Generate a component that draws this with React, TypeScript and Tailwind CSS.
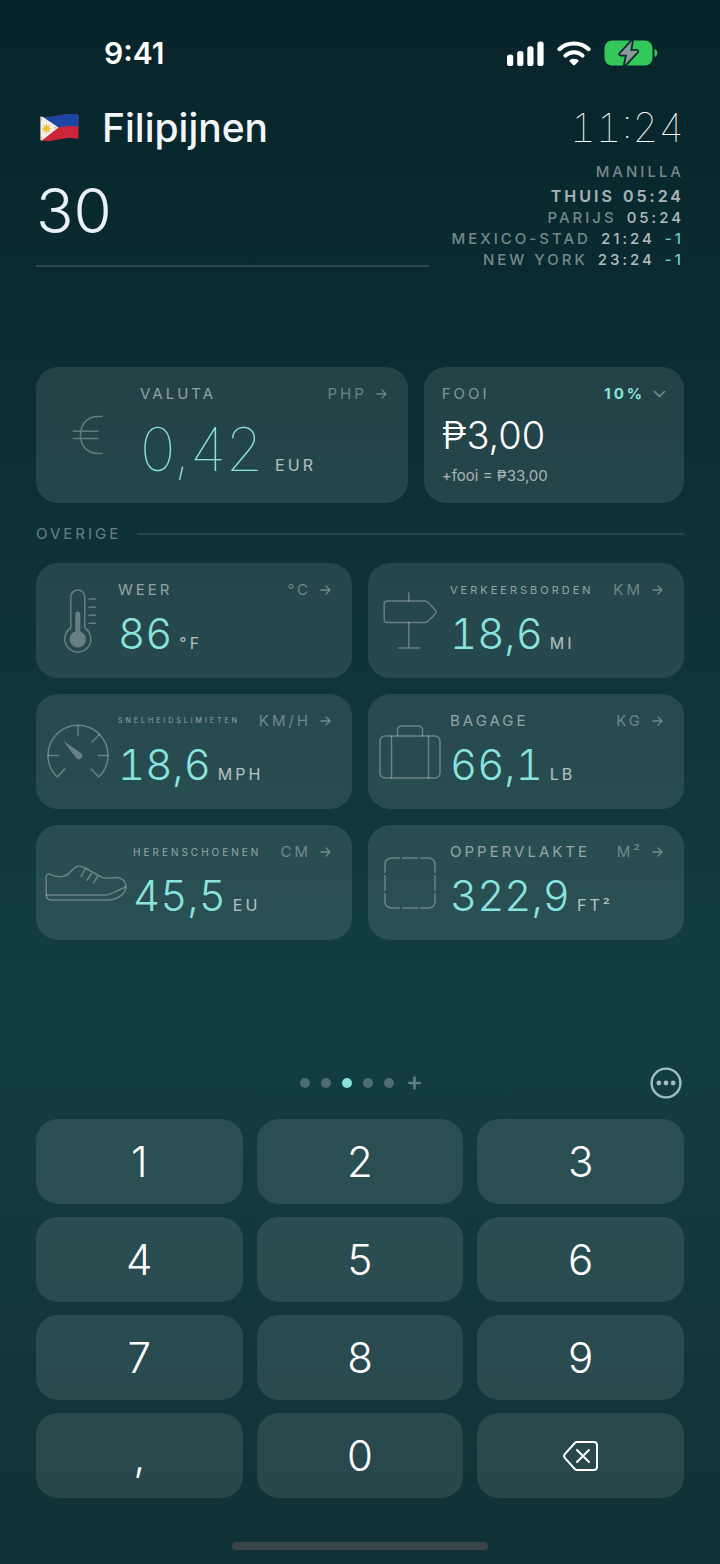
import { useState } from "react";
import type { ReactNode } from "react";

const clocks = [
  { city: "Parijs", time: "05:24", day: "" },
  { city: "Mexico-Stad", time: "21:24", day: "-1" },
  { city: "New York", time: "23:24", day: "-1" },
];

const keys = ["1", "2", "3", "4", "5", "6", "7", "8", "9", ",", "0"];

const Flag = () => (
  <svg width="39" height="28" viewBox="0 0 39 28" role="img" aria-label="Vlag van de Filipijnen">
    <defs>
      <clipPath id="flag">
        <path d="M0.5 2.5C7 4 13 2.5 19 1.2S32 -0.8 38.5 1V25C32 23.2 26 24 19 25.4S6 27.6 0.5 26.3Z" />
      </clipPath>
    </defs>
    <g clipPath="url(#flag)">
      <path d="M0 0H39V28H0Z" fill="#cc2439" />
      <path d="M0 0H39V12.5C30 11.3 24 12.2 18 13.6L0 15Z" fill="#1d45a3" />
      <path d="M0 1L18.5 13.5L0 28Z" fill="#efeee8" />
      <g stroke="#f0bb2a" strokeWidth="1.2">
        <path d="M6.5 10V19M2 14.5H11M3.3 11.3L9.7 17.7M9.7 11.3L3.3 17.7" />
      </g>
      <circle cx="6.5" cy="14.5" r="2.6" fill="#f0bb2a" />
      <path d="M1.2 5.2L2.2 6.6M1.2 24.6L2.2 23.2M14.6 13.6H16.2" stroke="#f0bb2a" strokeWidth="1.2" />
    </g>
  </svg>
);

const StatusIcons = () => (
  <div className="flex items-center gap-[13px]">
    <svg width="37" height="26" viewBox="0 0 37 26" fill="#fff">
      <rect x="0" y="14.5" width="6.2" height="11.5" rx="2.6" />
      <rect x="10.2" y="11" width="6.2" height="15" rx="2.6" />
      <rect x="20.3" y="6.3" width="6.2" height="19.7" rx="2.6" />
      <rect x="30.4" y="1.5" width="6.2" height="24.5" rx="2.6" />
    </svg>
    <svg width="34" height="26" viewBox="0 0 34 26" fill="none" stroke="#fff" strokeWidth="4" strokeLinecap="round" strokeLinejoin="round">
      <path d="M2.4 9.2C10.2 1.6 23.8 1.6 31.6 9.2" />
      <path d="M8.4 15.6C13.2 11 20.8 11 25.6 15.6" />
      <path d="M13.6 21C15.4 19.6 18.6 19.6 20.4 21L17 24.2Z" fill="#fff" strokeWidth="2.4" />
    </svg>
    <svg width="54" height="28" viewBox="0 0 54 28">
      <rect x="0.5" y="1.5" width="48" height="25" rx="7.5" fill="#34c759" />
      <path d="M50.5 10C54.3 11 54.3 17 50.5 18Z" fill="#34c759" />
      <path
        d="M28 2L16.4 14.6C15.9 15.2 16.1 15.7 16.8 15.7H23L20.8 26L33 13C33.6 12.3 33.3 11.8 32.5 11.8H26.2Z"
        fill="#8a9a9b"
        stroke="#0a2a2f"
        strokeWidth="3.6"
        strokeLinejoin="round"
        paintOrder="stroke"
      />
    </svg>
  </div>
);

const Arrow = () => (
  <svg width="11" height="12" viewBox="0 0 11 12" fill="none" stroke="currentColor" strokeWidth="1.3" strokeLinecap="round" strokeLinejoin="round">
    <path d="M1 6H10M6 2L10 6L6 10" />
  </svg>
);

const iconProps = {
  fill: "none",
  stroke: "currentColor",
  strokeWidth: 1.5,
  strokeLinecap: "round" as const,
  strokeLinejoin: "round" as const,
};

const EuroIcon = () => (
  <svg width="32" height="40" viewBox="0 0 32 40" {...iconProps}>
    <path d="M30 1.5H26C15.5 1.5 8.5 9 8.5 20S15.5 38.5 26 38.5H30M1.5 16.2H26M1.5 23.5H26" />
  </svg>
);

const ThermometerIcon = () => (
  <svg width="37" height="66" viewBox="-3 0 37 66" {...iconProps}>
    <path d="M7.8 40V9A7 7 0 0 1 21.8 9V40A13 13 0 1 1 7.8 40Z" />
    <path d="M26 11H32.5M26 19.2H32.5M26 27.2H32.5M26 35.2H32.5" />
    <path d="M12.3 26A2.5 2.5 0 0 1 17.3 26V43.4A8.2 8.2 0 1 1 12.3 43.4Z" fill="currentColor" stroke="none" />
  </svg>
);

const SignIcon = () => (
  <svg width="54" height="58" viewBox="0 0 54 58" {...iconProps}>
    <path d="M25.8 1V9M25.8 30.5V56M15.5 56H36" />
    <path d="M4 9H41.5C43 9 44 9.3 45 10.3L52.5 18.2C53.5 19.3 53.5 20.3 52.5 21.4L45 29.2C44 30.2 43 30.5 41.5 30.5H4C2 30.5 1.2 29.5 1.2 27.7V11.8C1.2 10 2 9 4 9Z" />
  </svg>
);

const GaugeIcon = () => (
  <svg width="62" height="56" viewBox="0 0 62 56" {...iconProps}>
    <path d="M10.3 53A30 30 0 1 1 51.7 53L44.3 45M10.3 53L17.7 45" />
    <path d="M31 1.5V11.5M1 31.5H11.5M51 31.5H61M52.5 10.5L45 18" />
    <path d="M16.2 16.8L34 29A3.4 3.4 0 0 1 29.6 34.4Z" fill="currentColor" stroke="none" />
  </svg>
);

const BagIcon = () => (
  <svg width="62" height="54" viewBox="0 0 62 54" {...iconProps}>
    <rect x="1" y="11" width="60" height="42" rx="5" />
    <path d="M18.5 11V5C18.5 2.5 20 1 22.5 1H39.5C42 1 43.5 2.5 43.5 5V11M12.5 11V53M49.5 11V53" />
  </svg>
);

const ShoeIcon = () => (
  <svg width="82" height="36" viewBox="0 0 82 36" {...iconProps}>
    <path d="M1.2 30V11.2C1.2 8.8 4 8.6 6 9.6C12 12.6 20 12.4 24 8.4C27.5 4.8 29.5 1.2 34 1.2C38 1.2 40 2.8 43 4.5L50 8.5C54.5 11.2 56.5 13.4 61 13.2L71 12.6C77 12.6 81 16.5 81 21C81 30 71 35 63 35H7C3.5 35 1.2 33 1.2 30Z" />
    <path d="M1.5 30H60C67 30 71 26 80.5 22M40 4.5L36 11.5M46.5 8.5L42.2 15M52.5 11.5L48.5 18" />
  </svg>
);

const AreaIcon = () => (
  <svg width="52" height="52" viewBox="0 0 52 52" {...iconProps} strokeLinecap="butt">
    <path d="M1 16V8C1 3.5 3.5 1 8 1H16M18 1H34M36 1H44C48.5 1 51 3.5 51 8V16M51 18V34M51 36V44C51 48.5 48.5 51 44 51H36M34 51H18M16 51H8C3.5 51 1 48.5 1 44V36M1 34V18" />
  </svg>
);

type Conversion = {
  label: string;
  labelClass?: string;
  value: string;
  unit: string;
  from: string;
  icon: ReactNode;
  iconClass?: string;
};

const conversions: Conversion[] = [
  { label: "Weer", value: "86", unit: "°F", from: "°C", icon: <ThermometerIcon /> },
  { label: "Verkeersborden", labelClass: "text-[11px]", value: "18,6", unit: "mi", from: "km", icon: <SignIcon /> },
  { label: "Snelheidslimieten", labelClass: "text-[7px]", value: "18,6", unit: "mph", from: "km/h", icon: <GaugeIcon /> },
  { label: "Bagage", value: "66,1", unit: "lb", from: "kg", icon: <BagIcon /> },
  { label: "Herenschoenen", labelClass: "text-[10px]", value: "45,5", unit: "EU", from: "cm", icon: <ShoeIcon />, iconClass: "w-[97px]" },
  { label: "Oppervlakte", value: "322,9", unit: "ft²", from: "m²", icon: <AreaIcon /> },
];

const ConversionCard = ({ label, labelClass = "text-[15px]", value, unit, from, icon, iconClass = "w-[82px]" }: Conversion) => (
  <article className="flex h-[115px] rounded-[22px] bg-white/10">
    <div className={`flex shrink-0 items-center justify-center pl-[2px] text-white/30 ${iconClass}`}>{icon}</div>
    <div className="min-w-0 flex-1 pt-[17px] pr-[21px]">
      <div className="flex h-5 items-center justify-between uppercase">
        <h3 className={`tracking-[3px] text-white/50 ${labelClass}`}>{label}</h3>
        <button className="flex items-center gap-[9px] text-[15px] tracking-[3px] text-white/35 uppercase">
          {from}
          <Arrow />
        </button>
      </div>
      <p className="mt-[10px] flex items-baseline gap-[7px] whitespace-nowrap">
        <span className="text-[42px] leading-[48px] font-light text-[#8ae3df] tabular-nums">{value}</span>
        <span className="text-base tracking-[3px] text-white/65 uppercase">{unit}</span>
      </p>
    </div>
  </article>
);

export default function App() {
  const [amount, setAmount] = useState("30");
  const [tip, setTip] = useState("10%");

  const press = (key: string) => setAmount((a) => (a === "0" ? key : a + key));

  return (
    <div className="flex min-h-screen flex-col bg-linear-to-b from-[#07242a] via-[#123e43] via-65% to-[#113236] px-9 pb-[14px] font-['Inter',sans-serif] text-white">
      <div className="flex h-[106px] shrink-0 items-center justify-between pr-[26px] pl-[68px]">
        <time className="text-[30px] font-semibold">9:41</time>
        <StatusIcons />
      </div>

      <header className="flex gap-[23px]">
        <div className="min-w-0 flex-1">
          <div className="flex h-11 items-center gap-[23px] pl-1">
            <Flag />
            <h1 className="text-[39px] font-medium text-[#f3f7fa]">Filipijnen</h1>
          </div>
          <input
            aria-label="Bedrag"
            inputMode="decimal"
            value={amount}
            onChange={(e) => setAmount(e.target.value)}
            className="mt-6 block h-[93px] w-full border-b-2 border-white/15 bg-transparent pb-[19px] text-[62px] font-light text-[#e9f0f6] outline-none"
          />
        </div>
        <div className="text-right text-[15px] tracking-[3px] whitespace-nowrap uppercase">
          <time className="block h-11 text-[40px] leading-[44px] font-thin tracking-normal tabular-nums">11:24</time>
          <p className="mt-3 leading-5 font-medium text-white/45">Manilla</p>
          <p className="mt-[3px] flex justify-end gap-2 text-base leading-[22px] font-semibold text-white/65">
            <span>Thuis</span>
            <time>05:24</time>
          </p>
          <ul className="leading-[21px] font-medium">
            {clocks.map((clock) => (
              <li key={clock.city} className="flex justify-end gap-[10px]">
                <span className="text-white/45">{clock.city}</span>
                <time className="text-white/70">{clock.time}</time>
                {clock.day && <span className="text-[#6fc9c5]">{clock.day}</span>}
              </li>
            ))}
          </ul>
        </div>
      </header>

      <main>
        <section className="mt-[97px] grid grid-cols-[10fr_7fr] gap-4">
          <article className="flex h-[136px] rounded-[22px] bg-white/10">
            <div className="flex w-[104px] shrink-0 items-center justify-center text-white/30">
              <EuroIcon />
            </div>
            <div className="flex-1 pt-[17px] pr-[21px]">
              <div className="flex h-5 items-center justify-between text-[15px] tracking-[3px] uppercase">
                <h2 className="text-white/50">Valuta</h2>
                <button className="flex items-center gap-[9px] text-white/35 uppercase">
                  PHP
                  <Arrow />
                </button>
              </div>
              <p className="mt-[13px] flex items-baseline gap-3 whitespace-nowrap">
                <span className="text-[60px] leading-[64px] font-thin text-[#8ae3df]">0,42</span>
                <span className="text-base tracking-[3px] text-white/65">EUR</span>
              </p>
            </div>
          </article>

          <article className="h-[136px] rounded-[22px] bg-white/10 px-[18px] pt-[17px]">
            <div className="flex h-5 items-center justify-between text-[15px] tracking-[3px] uppercase">
              <label htmlFor="tip" className="text-white/45">
                Fooi
              </label>
              <div className="flex items-center gap-2">
                <select
                  id="tip"
                  value={tip}
                  onChange={(e) => setTip(e.target.value)}
                  className="field-sizing-content appearance-none bg-transparent font-bold tracking-[3px] text-[#8ae3df] outline-none"
                >
                  <option>10%</option>
                  <option>15%</option>
                  <option>20%</option>
                </select>
                <svg width="13" height="8" viewBox="0 0 13 8" fill="none" stroke="#fff" strokeOpacity="0.4" strokeWidth="1.6" strokeLinecap="round" strokeLinejoin="round">
                  <path d="M1.5 1.5L6.5 6.5L11.5 1.5" />
                </svg>
              </div>
            </div>
            <p className="mt-[9px] text-[38px] leading-[44px] font-light">₱3,00</p>
            <p className="mt-[9px] text-[15px] leading-5 text-white/60">+fooi = ₱33,00</p>
          </article>
        </section>

        <section>
          <div className="mt-[21px] mb-[19px] flex items-center gap-4">
            <h2 className="text-[15px] leading-5 tracking-[3px] text-white/40 uppercase">Overige</h2>
            <hr className="flex-1 border-t-2 border-white/10" />
          </div>
          <div className="grid grid-cols-2 gap-4">
            {conversions.map((item) => (
              <ConversionCard key={item.label} {...item} />
            ))}
          </div>
        </section>
      </main>

      <nav className="mt-auto grid grid-cols-[1fr_auto_1fr] items-center pt-8">
        <div className="col-start-2 flex items-center gap-[11px]">
          {[1, 2, 3, 4, 5].map((page) => (
            <button
              key={page}
              aria-label={`Pagina ${page}`}
              className={page === 3 ? "size-[10px] rounded-full bg-[#8ae3df]" : "size-[10px] rounded-full bg-white/25"}
            />
          ))}
          <button aria-label="Pagina toevoegen" className="ml-[3px] text-white/35">
            <svg width="13" height="14" viewBox="0 0 13 14" fill="none" stroke="currentColor" strokeWidth="2.6" strokeLinecap="round">
              <path d="M1.3 7H11.7M6.5 1.5V12.5" />
            </svg>
          </button>
        </div>
        <button aria-label="Meer" className="mr-[2px] justify-self-end text-[#a3bcc2]">
          <svg width="32" height="32" viewBox="0 0 32 32" fill="currentColor">
            <circle cx="16" cy="16" r="14.4" fill="none" stroke="currentColor" strokeWidth="2.4" />
            <circle cx="8.8" cy="16" r="2.4" />
            <circle cx="16" cy="16" r="2.4" />
            <circle cx="23.2" cy="16" r="2.4" />
          </svg>
        </button>
      </nav>

      <div className="mt-5 grid grid-cols-3 gap-x-[14px] gap-y-[13px] text-[42px] font-light">
        {keys.map((key) => (
          <button key={key} onClick={() => press(key)} className="h-[85px] rounded-[22px] bg-white/10">
            {key}
          </button>
        ))}
        <button
          aria-label="Wissen"
          onClick={() => setAmount((a) => a.slice(0, -1) || "0")}
          className="flex h-[85px] items-center justify-center rounded-[22px] bg-white/10"
        >
          <svg width="36" height="30" viewBox="0 0 36 30" fill="none" stroke="#fff" strokeWidth="2" strokeLinecap="round" strokeLinejoin="round">
            <path d="M14 1H30.8C33 1 34 2 34 4.2V25.8C34 28 33 29 30.8 29H14C13.1 29 12.5 28.7 11.8 28L1.8 16.8C0.8 15.6 0.8 14.4 1.8 13.2L11.8 2C12.5 1.3 13.1 1 14 1Z" />
            <path d="M14 9L26 21M26 9L14 21" />
          </svg>
        </button>
      </div>

      <div className="mx-auto mt-11 h-2 w-64 shrink-0 rounded-full bg-[#3a4547]" />
    </div>
  );
}
